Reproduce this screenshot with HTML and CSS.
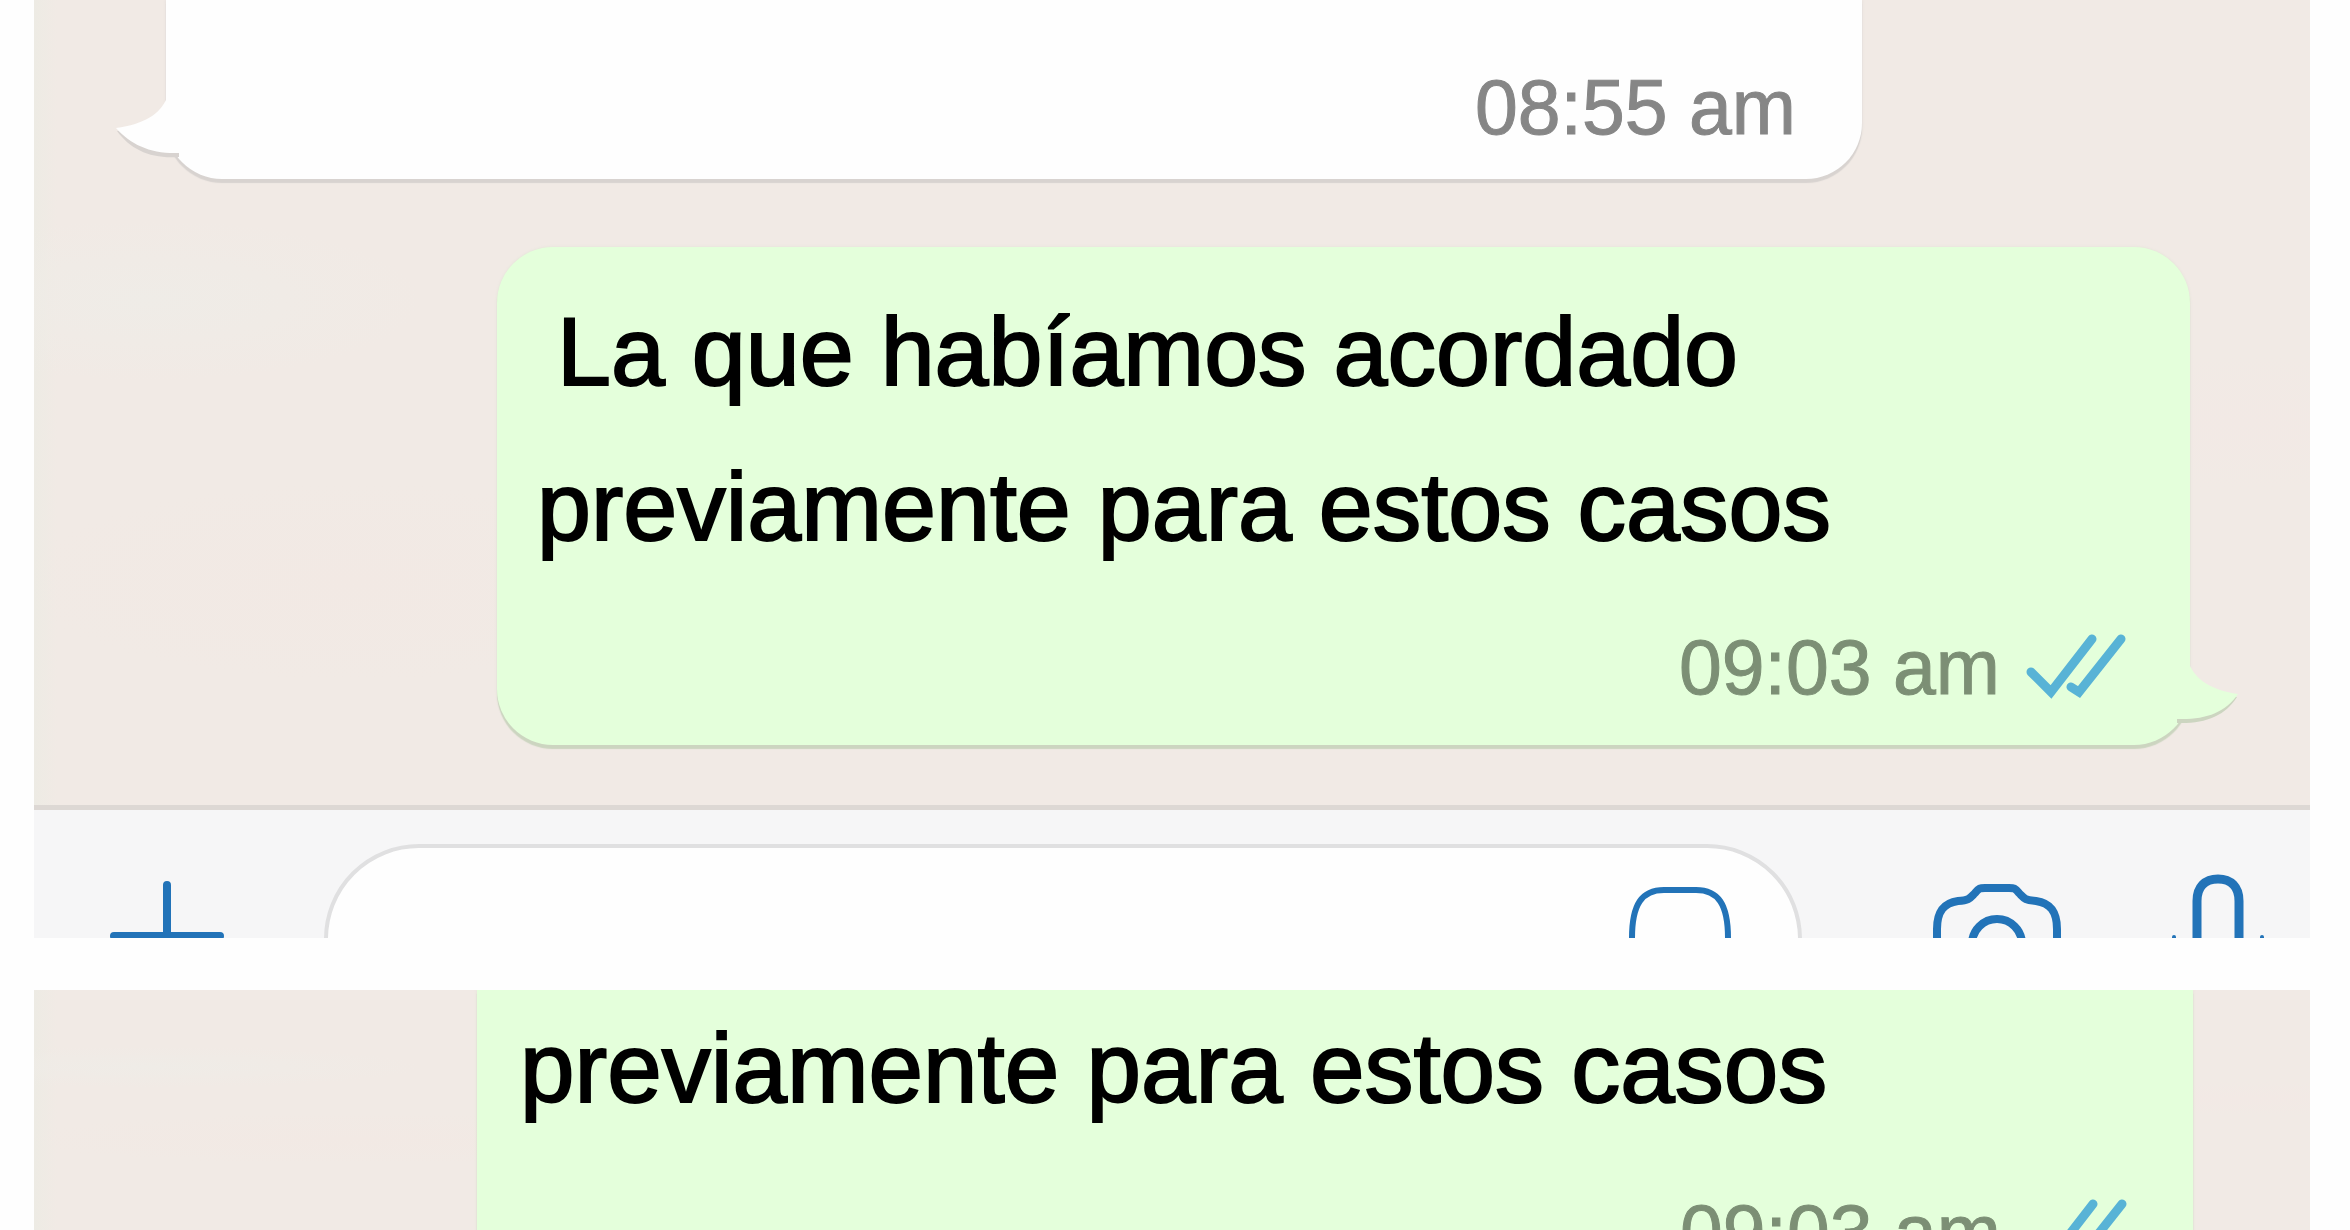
FILE: index.html
```html
<!DOCTYPE html>
<html lang="es">
<head>
    <meta charset="UTF-8">
    <title>Chat</title>
    <link rel="stylesheet" href="styles.css">
</head>
<body>

<main class="captures">

<section class="capture first">
    <div class="messages">

        <article class="bubble received">
            <svg class="tail" viewBox="0 0 64 84" aria-hidden="true">
                <path class="tail-shade" d="M51 20C46 24 30 28 2 31C16 50 36 59 64 57V20Z"/>
                <path d="M51 0C44 14 30 24 1 28C16 45 36 54 64 53V0Z"/>
            </svg>
            <footer class="meta"><time datetime="08:55">08:55 am</time></footer>
        </article>

        <article class="bubble sent">
            <p class="text"><span class="indent">La que habíamos acordado</span><br>previamente para estos casos</p>
            <footer class="meta">
                <time datetime="09:03">09:03 am</time>
                <svg class="ticks" viewBox="0 0 100 66" role="img" aria-label="Leído">
                    <path d="M5 38L25 58L66 5M45 53L53 58L95 5"/>
                </svg>
            </footer>
            <svg class="tail" viewBox="0 0 64 84" aria-hidden="true">
                <path class="tail-shade" d="M13 20C18 24 34 28 60 31C48 50 28 58 0 57V20Z"/>
                <path d="M13 0C20 14 34 24 61 28C48 47 28 54 0 53V0Z"/>
            </svg>
        </article>

    </div>

    <form class="composer">
        <button type="button" class="icon-button" aria-label="Adjuntar">
            <svg class="icon plus" viewBox="0 0 120 120">
                <path d="M61 7V113M8 58H114"/>
            </svg>
        </button>
        <div class="field">
            <input type="text" class="message" aria-label="Mensaje">
            <button type="button" class="icon-button sticker-button" aria-label="Stickers">
                <svg class="icon sticker" viewBox="0 0 104 104">
                    <path d="M4 52C4 18 14 4 36 4H68C90 4 100 18 100 52V60C100 88 90 100 68 100H36C14 100 4 88 4 60Z"/>
                </svg>
            </button>
        </div>
        <button type="button" class="icon-button" aria-label="Cámara">
            <svg class="icon camera" viewBox="0 0 130 110">
                <path d="M5 62V46C5 28 12 20 26 18C38 17 38 15 43 10C47 5 48 5 53 5H77C82 5 83 5 87 10C92 15 92 17 104 18C118 20 125 28 125 46V82C125 97 117 105 102 105H28C13 105 5 97 5 82Z"/>
                <circle cx="65" cy="61" r="25"/>
            </svg>
        </button>
        <button type="button" class="icon-button" aria-label="Grabar audio">
            <svg class="icon mic" viewBox="0 0 96 130">
                <path d="M27 66V27C27 13 35 5 48 5S69 13 69 27V66C69 80 61 88 48 88S27 80 27 66Z"/>
                <path class="mic-stand" d="M4 63C4 90 22 104 48 104S92 90 92 63"/>
            </svg>
        </button>
    </form>
</section>  <!-- end of first capture -->


<section class="capture second">
    <div class="messages">
        <article class="bubble sent">
            <p class="text">previamente para estos casos</p>
            <footer class="meta">
                <time datetime="09:03">09:03 am</time>
                <svg class="ticks" viewBox="0 0 100 66" role="img" aria-label="Leído">
                    <path d="M5 38L25 58L66 5M45 53L53 58L95 5"/>
                </svg>
            </footer>
        </article>
    </div>
</section>  <!-- end of second capture -->

</main>

</body>
</html>
```

FILE: styles.css
```css
* {
    box-sizing: border-box;
}

body {
    margin: 0;
    background: #fefefe;
    font-family: "Liberation Sans", Arial, sans-serif;
    color: #000;
}

.captures {
    display: flex;
    flex-direction: column;
    gap: 52px;
    height: 100vh;
    padding: 0 40px 0 34px;
    overflow: hidden;
}

.capture {
    flex: none;
    overflow: hidden;
    background-color: #f1eae5;
    background-image:
        radial-gradient(ellipse at 5% 32%, #efece7 0, transparent 9%),
        radial-gradient(ellipse at 14% 62%, #f2e9e4 0, transparent 12%),
        radial-gradient(ellipse at 97% 45%, #f2e9e5 0, transparent 9%),
        linear-gradient(90deg, #edebe4 0, transparent 1%);
}

.first {
    height: 938px;
}

.second {
    flex: 1;
}

.messages {
    display: flex;
    flex-direction: column;
    gap: 68px;
    padding: 0 120px 60px 132px;
}

.bubble {
    position: relative;
    border-radius: 56px;
}

.received {
    align-self: flex-start;
    width: 84%;
    max-width: 1696px;
    padding: 63px 66px 28px;
    border-top-left-radius: 0;
    border-top-right-radius: 0;
    background: #fefefe;
    box-shadow: 0 4px 1px #d8d3d0, 0 0 3px #dedad6;
    color: #868686;
}

.sent {
    align-self: flex-end;
    width: 84%;
    max-width: 1693px;
    padding: 27px 64px 34px 40px;
    background: #e4ffdb;
    box-shadow: 0 4px 1px #ccd5c0, 0 0 3px #e2e3d6;
    color: #7c8f75;
}

.text {
    margin: 0;
    padding-bottom: 39px;
    font-size: 97px;
    line-height: 155px;
    color: #000;
    -webkit-text-stroke: 2px #000;
}

.indent {
    padding-left: 20px;
}

.meta {
    display: flex;
    justify-content: flex-end;
    align-items: center;
    gap: 26px;
    font-size: 77px;
    line-height: 88px;
    -webkit-text-stroke: 1px currentColor;
}

.ticks {
    width: 100px;
    height: 66px;
    fill: none;
    stroke: #58b3d6;
    stroke-width: 9px;
    stroke-linecap: round;
}

/* bubble tails */
.tail {
    position: absolute;
    bottom: -5px;
    width: 64px;
    height: 84px;
    fill: #fefefe;
}

.received .tail {
    left: -51px;
}

.sent .tail {
    right: -51px;
    fill: #e4ffdb;
}

.tail .tail-shade {
    fill: #d8d3d0;
}

.sent .tail-shade {
    fill: #ccd5c0;
}

/* bottom bar */
.composer {
    display: flex;
    align-items: flex-start;
    height: 200px;
    padding: 32px 44px 0 72px;
    border-top: 5px solid #ddd8d4;
    background: #f6f6f7;
}

.icon-button {
    flex: none;
    margin-top: 32px;
    padding: 0;
    border: 0;
    background: none;
}

.icon {
    display: block;
    fill: none;
    stroke: #2273b8;
    stroke-width: 8px;
    stroke-linecap: round;
    stroke-linejoin: round;
}

.plus {
    width: 120px;
    height: 120px;
    margin-top: 4px;
}

.field {
    display: flex;
    flex: 1;
    align-items: flex-start;
    min-width: 0;
    height: 190px;
    margin: 2px 130px 0 98px;
    padding: 0 66px 0 90px;
    border: 4px solid #e0e0e1;
    border-radius: 95px;
    background: #fefefe;
}

.message {
    flex: 1;
    min-width: 0;
    height: 180px;
    border: 0;
    background: none;
    font: inherit;
    font-size: 97px;
    outline: none;
}

.sticker-button {
    margin-top: 38px;
}

.sticker {
    width: 104px;
    height: 104px;
    stroke-width: 6px;
}

.camera {
    width: 130px;
    height: 110px;
    margin-top: 9px;
}

.mic {
    width: 96px;
    height: 130px;
    margin-left: 108px;
    stroke-width: 9px;
}

.mic-stand {
    stroke-width: 4px;
}

/* scrolled a little further, slightly larger text */
.second .messages {
    padding-right: 117px;
}

.second .sent {
    width: 100%;
    max-width: 1716px;
    padding: 1px 66px 34px 43px;
    border-radius: 0;
}

.second .text {
    padding-bottom: 42px;
    font-size: 98px;
}
```
